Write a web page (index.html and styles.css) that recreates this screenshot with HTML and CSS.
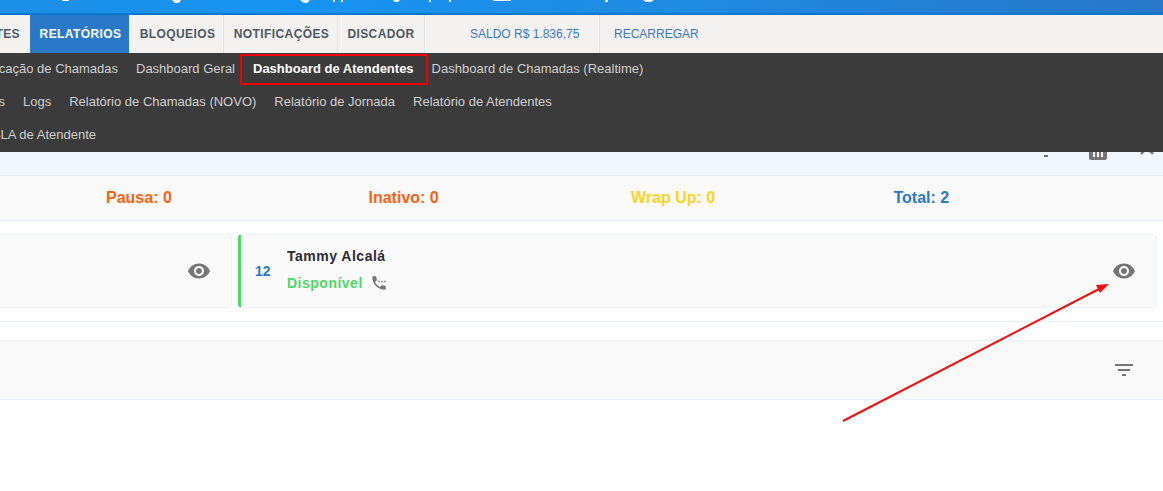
FILE: index.html
```html
<!DOCTYPE html>
<html lang="pt-BR">
<head>
<meta charset="utf-8">
<title>Dashboard de Atendentes</title>
<link rel="stylesheet" href="styles.css">
</head>
<body>
<div class="page">
  <header class="topbar">
    <svg class="topbar-icons" width="1163" height="3" viewBox="0 0 1163 3" fill="#fff">
      <rect x="62" y="0" width="7" height="1"/>
      <path d="M172 0h9l-2 3h-4z"/>
      <path d="M300 0h10l-3 3h-3z"/>
      <rect x="333" y="0" width="2" height="2"/><rect x="341" y="0" width="2" height="2"/>
      <path d="M393 0h7l-2 2h-3z"/>
      <rect x="429" y="0" width="2" height="2"/><rect x="449" y="0" width="2" height="2"/>
      <rect x="493" y="0" width="18" height="1"/>
      <rect x="605" y="0" width="3" height="2"/>
      <path d="M643 0h11l-3 2h-5z"/>
    </svg>
  </header>

  <nav class="mainnav">
    <div class="clip clip-nav"><a class="nav-item nav-cut">ATENDENTES</a></div>
    <a class="nav-item nav-active">RELATÓRIOS</a>
    <a class="nav-item nav-blo">BLOQUEIOS</a>
    <a class="nav-item nav-not">NOTIFICAÇÕES</a>
    <a class="nav-item nav-dis">DISCADOR</a>
    <span class="nav-info nav-saldo">SALDO R$ 1.836,75</span>
    <a class="nav-info nav-rec">RECARREGAR</a>
  </nav>

  <div class="subnav">
    <div class="subrow">
      <div class="clip clip-a"><a class="sub-item">Classificação de Chamadas</a></div>
      <a class="sub-item">Dashboard Geral</a>
      <a class="sub-item sub-active">Dashboard de Atendentes</a>
      <a class="sub-item">Dashboard de Chamadas (Realtime)</a>
    </div>
    <div class="subrow">
      <div class="clip clip-b"><a class="sub-item">Relatórios</a></div>
      <a class="sub-item">Logs</a>
      <a class="sub-item">Relatório de Chamadas (NOVO)</a>
      <a class="sub-item">Relatório de Jornada</a>
      <a class="sub-item">Relatório de Atendentes</a>
    </div>
    <div class="subrow">
      <div class="clip clip-c"><a class="sub-item">SLA de Atendente</a></div>
    </div>
  </div>

  <div class="band">
    <span class="band-minus"></span>
    <span class="band-cols"><i></i><i></i><i></i></span>
    <svg class="band-x" width="14" height="14" viewBox="0 0 14 14"><path d="M1 1l12 12M13 1L1 13" stroke="#757575" stroke-width="2.4"/></svg>
  </div>

  <section class="stats">
    <span class="stat stat-pausa">Pausa: 0</span>
    <span class="stat stat-inativo">Inativo: 0</span>
    <span class="stat stat-wrap">Wrap Up: 0</span>
    <span class="stat stat-total">Total: 2</span>
  </section>

  <section class="cards">
    <article class="card card-left">
      <svg class="icon-eye" width="24" height="24" viewBox="0 0 24 24"><path d="M12 4.500C7 4.500 2.730 7.610 1 12c1.730 4.390 6 7.500 11 7.500s9.270-3.110 11-7.500c-1.730-4.390-6-7.500-11-7.500zM12 17c-2.760 0-5-2.240-5-5s2.240-5 5-5 5 2.240 5 5-2.240 5-5 5zm0-8c-1.660 0-3 1.340-3 3s1.340 3 3 3 3-1.340 3-3-1.340-3-3-3z"/></svg>
    </article>
    <article class="card card-main">
      <span class="card-num">12</span>
      <div class="card-info">
        <div class="card-name">Tammy Alcalá</div>
        <div class="card-status">
          <span>Disponível</span>
          <svg class="icon-phone" width="18" height="18" viewBox="0 0 24 24"><path d="M13 9h-2v2h2V9zm4 0h-2v2h2V9zm3 6.500c-1.250 0-2.450-.2-3.570-.57-.35-.11-.74-.03-1.020.24l-2.200 2.200c-2.830-1.440-5.150-3.750-6.590-6.580l2.200-2.210c.28-.27.36-.66.25-1.010C8.700 6.450 8.500 5.250 8.500 4c0-.55-.45-1-1-1H4c-.55 0-1 .45-1 1 0 9.390 7.610 17 17 17 .55 0 1-.45 1-1v-3.500c0-.55-.45-1-1-1zM19 9v2h2V9h-2z"/></svg>
        </div>
      </div>
      <svg class="icon-eye" width="24" height="24" viewBox="0 0 24 24"><path d="M12 4.500C7 4.500 2.730 7.610 1 12c1.730 4.390 6 7.500 11 7.500s9.270-3.110 11-7.500c-1.730-4.390-6-7.500-11-7.500zM12 17c-2.760 0-5-2.240-5-5s2.240-5 5-5 5 2.240 5 5-2.240 5-5 5zm0-8c-1.660 0-3 1.340-3 3s1.340 3 3 3 3-1.340 3-3-1.340-3-3-3z"/></svg>
    </article>
  </section>

  <section class="filterbar">
    <svg class="icon-filter" width="24" height="24" viewBox="0 0 24 24"><path d="M10 18h4v-2h-4v2zM3 6v2h18V6H3zm3 7h12v-2H6v2z"/></svg>
  </section>

  <div class="mark-box"></div>
  <svg class="mark-arrow" width="1163" height="491" viewBox="0 0 1163 491">
    <line x1="843" y1="421" x2="1100" y2="288.500" stroke="#f01010" stroke-width="2"/>
    <path d="M1109 284l-13 1 4 8z" fill="#f01010"/>
  </svg>
</div>
</body>
</html>
```

FILE: styles.css
```css
* { box-sizing: border-box; }
html, body { margin: 0; padding: 0; background: #fff; }
.page {
  position: relative;
  width: 1163px;
  height: 491px;
  overflow: hidden;
  font-family: "Liberation Sans", Arial, sans-serif;
}

.topbar {
  height: 15px;
  background: linear-gradient(90deg, #1c8fe6 0%, #1693f2 25%, #1e8ce4 55%, #2877c8 100%);
  border-bottom: 2px solid #0277cc;
  overflow: hidden;
}
.topbar-icons { display: block; }

.clip {
  display: flex;
  justify-content: flex-end;
  overflow: hidden;
  white-space: nowrap;
  flex: none;
}

.mainnav {
  display: flex;
  align-items: stretch;
  height: 38px;
  background: #f3f2f1;
  font-size: 12px;
  font-weight: 700;
  letter-spacing: 0.4px;
}
.clip-nav { width: 30px; }
.nav-item {
  display: flex;
  align-items: center;
  justify-content: center;
  color: #4d5964;
  white-space: nowrap;
  flex: none;
}
.nav-cut { padding-right: 10px; }
.nav-active { width: 99px; padding-left: 2px; background: #2a78c8; color: #fff; }
.nav-blo { width: 94px; padding-left: 2px; border-right: 1px solid #e2e2e2; margin-left: 1px; }
.nav-not { width: 114px; padding-left: 2px; border-right: 1px solid #e2e2e2; }
.nav-dis { width: 87px; border-right: 1px solid #e2e2e2; }
.nav-info {
  display: flex;
  align-items: center;
  font-size: 12px;
  font-weight: 400;
  letter-spacing: 0;
  color: #3b78c4;
  white-space: nowrap;
}
.nav-saldo { padding: 0 20px 0 45px; border-right: 1px solid #e2e2e2; width: 175px; }
.nav-rec { padding-left: 14px; }

.subnav {
  height: 99px;
  background: #3b3b3b;
  font-size: 13px;
  color: #cfcfcf;
}
.subrow { display: flex; height: 33px; align-items: center; padding-bottom: 2px; }
.clip-a { width: 127px; }
.clip-b { width: 14px; }
.clip-c { width: 105px; }
.sub-item {
  padding: 0 9px;
  white-space: nowrap;
  flex: none;
}
.sub-active { font-weight: 700; color: #fff; }

.band {
  position: relative;
  height: 24px;
  background: #f1f8ff;
  border-bottom: 1px solid #e3ebf3;
  overflow: hidden;
  display: flex;
  align-items: flex-start;
}
.band-minus {
  width: 4px;
  height: 2px;
  background: #757575;
  margin: 3px 0 0 1044px;
  flex: none;
}
.band-cols {
  width: 18px;
  height: 8px;
  margin-left: 41px;
  background: #757575;
  border-radius: 0 0 2px 2px;
  display: flex;
  justify-content: center;
  gap: 2px;
  flex: none;
}
.band-cols i { width: 2px; height: 5px; background: #fff; }
.band-x { margin: -11px 0 0 33px; flex: none; }

.stats {
  display: grid;
  grid-template-columns: repeat(4, 262.500px);
  align-items: center;
  height: 45px;
  padding-left: 106px;
  background: #fafafa;
  border-bottom: 1px solid #e3ecf5;
  font-size: 16px;
  font-weight: 700;
}
.stat-pausa, .stat-inativo { color: #ff5f0f; }
.stat-wrap { color: #ffd21e; }
.stat-total { color: #2a78c8; }

.cards {
  display: flex;
  gap: 6px;
  padding: 13px 6px 13px 0;
  border-bottom: 1px solid #e9eff6;
}
.card {
  height: 74px;
  background: #fafafa;
  border: 1px solid #edf2f8;
  border-radius: 4px;
  display: flex;
  align-items: center;
}
.card-left {
  width: 240px;
  margin-left: -8px;
  justify-content: flex-end;
  padding-right: 20px;
  flex: none;
}
.card-main {
  flex: 1;
  border-left: 3px solid #4cdb62;
  padding-right: 20px;
}
.icon-eye { fill: #757575; flex: none; display: block; }
.card-num {
  width: 46px;
  padding-left: 14px;
  font-size: 14px;
  font-weight: 700;
  color: #2a78c8;
  flex: none;
}
.card-info { flex: 1; padding-bottom: 3px; }
.card-name {
  font-size: 14px;
  font-weight: 700;
  color: #2b2b36;
  letter-spacing: 0.5px;
  line-height: 18px;
  margin-bottom: 9px;
}
.card-status {
  display: flex;
  align-items: center;
  gap: 7px;
  font-size: 14px;
  font-weight: 700;
  color: #4cd964;
  letter-spacing: 0.5px;
  line-height: 18px;
}
.icon-phone { fill: #757575; display: block; }

.filterbar {
  display: flex;
  justify-content: flex-end;
  align-items: center;
  height: 60px;
  margin-top: 18px;
  padding-right: 27px;
  background: #f9f9f9;
  border-top: 1px solid #eaf0f6;
  border-bottom: 1px solid #eaf0f6;
}
.icon-filter { fill: #757575; display: block; }

.mark-box {
  position: absolute;
  left: 240px;
  top: 54px;
  width: 188px;
  height: 31px;
  border: 2px solid #f00000;
}
.mark-arrow { position: absolute; left: 0; top: 0; pointer-events: none; }
```
